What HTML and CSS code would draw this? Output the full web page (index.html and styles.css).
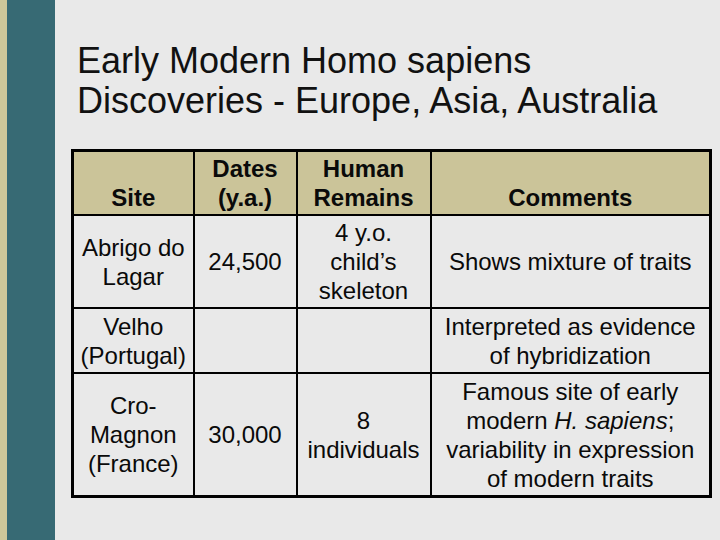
FILE: index.html
```html
<!DOCTYPE html>
<html>
<head>
<meta charset="utf-8">
<link rel="stylesheet" href="styles.css">
</head>
<body>
<div class="slide">
  <div class="stripe"></div>
  <div class="band"></div>
  <main class="content">
    <h1 class="title">Early Modern Homo sapiens<br>Discoveries - Europe, Asia, Australia</h1>
    <table class="grid">
      <colgroup>
        <col class="c1"><col class="c2"><col class="c3"><col class="c4">
      </colgroup>
      <thead>
        <tr>
          <th>Site</th>
          <th>Dates<br>(y.a.)</th>
          <th>Human<br>Remains</th>
          <th>Comments</th>
        </tr>
      </thead>
      <tbody>
        <tr class="r1">
          <td>Abrigo do<br>Lagar</td>
          <td>24,500</td>
          <td>4 y.o.<br>child’s<br>skeleton</td>
          <td>Shows mixture of traits</td>
        </tr>
        <tr class="r2">
          <td>Velho<br>(Portugal)</td>
          <td></td>
          <td></td>
          <td>Interpreted as evidence<br>of hybridization</td>
        </tr>
        <tr class="r3">
          <td>Cro-<br>Magnon<br>(France)</td>
          <td>30,000</td>
          <td>8<br>individuals</td>
          <td>Famous site of early<br>modern <i>H. sapiens</i>;<br>variability in expression<br>of modern traits</td>
        </tr>
      </tbody>
    </table>
  </main>
</div>
</body>
</html>
```
FILE: styles.css
```css
html, body {
  margin: 0;
  padding: 0;
}
body {
  width: 720px;
  height: 540px;
  overflow: hidden;
  background: #e9e9e9;
  font-family: "Liberation Sans", Arial, sans-serif;
  color: #0a0a0a;
}
.slide {
  display: flex;
  width: 720px;
  height: 540px;
}
.stripe {
  width: 7px;
  background: #cdc79a;
}
.band {
  width: 48px;
  background: #376a74;
}
.content {
  flex: 1;
  padding: 41px 0 0 16px;
}
.title {
  margin: 0 0 28px 6px;
  font-weight: normal;
  font-size: 36px;
  line-height: 40px;
  color: #111;
}
.grid {
  border-collapse: collapse;
  border: 3px solid #000;
  table-layout: fixed;
  width: 638px;
  font-size: 24px;
  line-height: 29px;
  text-align: center;
}
.c1 { width: 121px; }
.c2 { width: 103px; }
.c3 { width: 134px; }
.c4 { width: 280px; }
.grid th, .grid td {
  border: 2px solid #000;
  padding: 2px 0;
  white-space: nowrap;
}
.grid th {
  background: #cbc499;
  font-weight: bold;
  vertical-align: bottom;
  height: 57px;
}
.grid td {
  vertical-align: middle;
}
.r1 td { height: 87px; }
.r2 td { height: 59px; }
.r3 td { height: 117px; }
```
